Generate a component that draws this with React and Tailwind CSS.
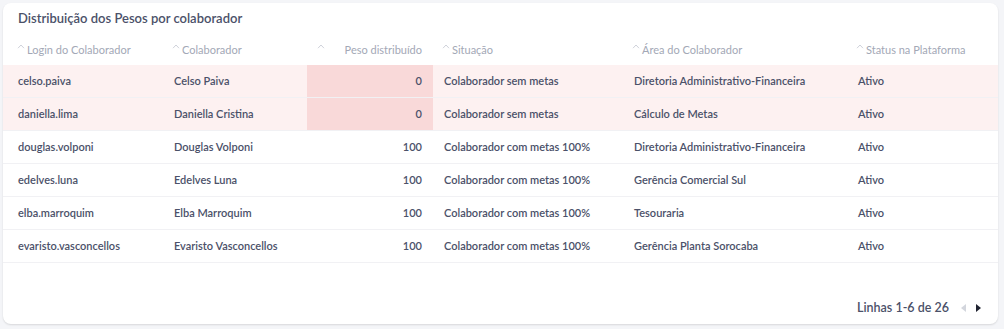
import React from "react";

const rows = [
  ["celso.paiva", "Celso Paiva", "0", "Colaborador sem metas", "Diretoria Administrativo-Financeira", "Ativo", true],
  ["daniella.lima", "Daniella Cristina", "0", "Colaborador sem metas", "Cálculo de Metas", "Ativo", true],
  ["douglas.volponi", "Douglas Volponi", "100", "Colaborador com metas 100%", "Diretoria Administrativo-Financeira", "Ativo", false],
  ["edelves.luna", "Edelves Luna", "100", "Colaborador com metas 100%", "Gerência Comercial Sul", "Ativo", false],
  ["elba.marroquim", "Elba Marroquim", "100", "Colaborador com metas 100%", "Tesouraria", "Ativo", false],
  ["evaristo.vasconcellos", "Evaristo Vasconcellos", "100", "Colaborador com metas 100%", "Gerência Planta Sorocaba", "Ativo", false],
];

const headers = [
  "Login do Colaborador",
  "Colaborador",
  "Peso distribuído",
  "Situação",
  "Área do Colaborador",
  "Status na Plataforma",
];

function Caret() {
  return (
    <svg width="8" height="5" viewBox="0 0 8 5" className="shrink-0 mb-[7px]">
      <path d="M1 4.2 L4 1 L7 4.2" fill="none" stroke="#cfd2da" strokeWidth="1" />
    </svg>
  );
}

const grid = "grid grid-cols-[160px_144px_126px_190px_224px_1fr]";

export default function App() {
  return (
    <div
      className="w-[1004px] h-[329px] bg-[#f4f5f8] p-[3px] pr-[6px] pb-[5px]"
      style={{ fontFamily: "Lato, 'Noto Sans', sans-serif" }}
    >
      <div className="h-full bg-white rounded-lg shadow-[0_1px_2px_rgba(0,0,0,0.12)] flex flex-col">
        <div className="h-[32px] pl-[15px] pt-[6px] text-[13px] leading-[18px] font-semibold text-[#4b5169]">
          Distribuição dos Pesos por colaborador
        </div>
        <div className={`${grid} h-[30px] text-[11px] text-[#a3a8b6]`}>
          {headers.map((h, i) => (
            <div
              key={h}
              className={`flex items-center gap-[2px] ${i === 0 ? "pl-[14px]" : "pl-[9px]"} ${
                i === 2 ? "justify-between pr-[11px] pl-[10px]" : ""
              }`}
            >
              <Caret />
              <span>{h}</span>
            </div>
          ))}
        </div>
        {rows.map((r) => (
          <div
            key={r[0]}
            className={`${grid} h-[33px] border-b border-[#f1f1f4] text-[11px] font-semibold text-[#4b5169] ${
              r[6] ? "bg-[#fdf1f1]" : ""
            }`}
          >
            <div className="flex items-center pl-[15px]">{r[0]}</div>
            <div className="flex items-center pl-[11px]">{r[1]}</div>
            <div className={`flex items-center justify-end pr-[11px] ${r[6] ? "bg-[#f9d9d9]" : ""}`}>{r[2]}</div>
            <div className="flex items-center pl-[11px]">{r[3]}</div>
            <div className="flex items-center pl-[11px]">{r[4]}</div>
            <div className="flex items-center pl-[11px]">{r[5]}</div>
          </div>
        ))}
        <div className="flex-1 flex items-end justify-end pb-[7px] pr-[17px]">
          <span className="text-[12.5px] font-semibold text-[#4b5169] leading-[18px]">Linhas 1-6 de 26</span>
          <div className="flex items-center gap-[10px] ml-[12px] h-[18px]">
            <svg width="5" height="8" viewBox="0 0 5 8">
              <path d="M5 0 L0 4 L5 8 Z" fill="#d3d6dd" />
            </svg>
            <svg width="5" height="8" viewBox="0 0 5 8">
              <path d="M0 0 L5 4 L0 8 Z" fill="#1f2230" />
            </svg>
          </div>
        </div>
      </div>
    </div>
  );
}
